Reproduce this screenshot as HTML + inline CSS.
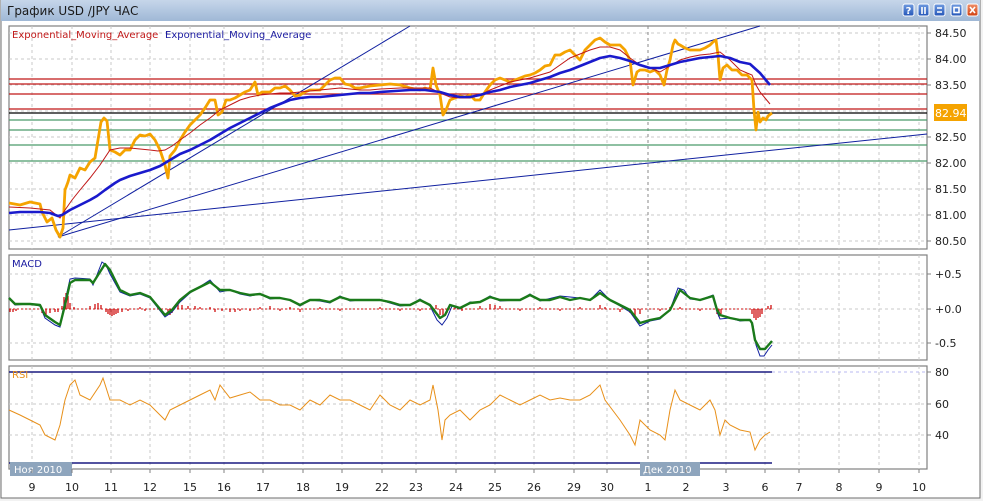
<!DOCTYPE html>
<html><head><meta charset="utf-8"><style>
html,body{margin:0;padding:0;background:#fff;width:983px;height:501px;overflow:hidden}
svg{display:block}
text{font-family:"DejaVu Sans","Liberation Sans",sans-serif}
</style></head><body>
<svg width="983" height="501" viewBox="0 0 983 501">
<rect x="0" y="0" width="983" height="501" fill="#f2f2f2"/>
<rect x="1" y="0" width="979" height="498" fill="#fff" stroke="#6e6e6e" stroke-width="1"/>
<defs><linearGradient id="tb" x1="0" y1="0" x2="0" y2="1"><stop offset="0" stop-color="#c6d6ea"/><stop offset="1" stop-color="#9fb8d6"/></linearGradient>
<linearGradient id="bb" x1="0" y1="0" x2="0" y2="1"><stop offset="0" stop-color="#6f9be0"/><stop offset="1" stop-color="#2456b8"/></linearGradient>
<linearGradient id="br" x1="0" y1="0" x2="0" y2="1"><stop offset="0" stop-color="#f0906a"/><stop offset="1" stop-color="#d04010"/></linearGradient></defs>
<rect x="1" y="0" width="979" height="21" fill="url(#tb)"/>
<text x="7" y="15" font-size="12" fill="#1a1a1a">График USD /JPY  ЧАС</text>
<g stroke="#fff" stroke-width="1">
<rect x="903" y="4" width="11" height="12" rx="2" fill="url(#bb)"/>
<rect x="918" y="4" width="11" height="12" rx="2" fill="url(#bb)"/>
<rect x="934" y="4" width="11" height="12" rx="2" fill="url(#bb)"/>
<rect x="951" y="4" width="11" height="12" rx="2" fill="url(#bb)"/>
<rect x="967" y="4" width="11" height="12" rx="2" fill="url(#br)"/>
</g>
<text x="908.5" y="14" font-size="10" font-weight="bold" fill="#fff" text-anchor="middle">?</text>
<g stroke="#fff" stroke-width="1.6" fill="none">
<path d="M922 7v7M925 7v7M937 8h5M937 12h5"/><rect x="954" y="7.5" width="5" height="5"/><path d="M970 7l5 6M975 7l-5 6"/>
</g>
<g fill="none" stroke="#808080" stroke-width="1.2">
<rect x="9" y="26" width="918" height="223"/>
<rect x="9" y="255" width="918" height="105"/>
<rect x="9" y="366" width="918" height="103"/>
</g>
<g stroke="#c8c8c8" stroke-dasharray="3,3" stroke-width="1">
<path d="M32 26V249M72 26V249M111 26V249M150 26V249M190 26V249M224 26V249M263 26V249M303 26V249M342 26V249M382 26V249M416 26V249M456 26V249M495 26V249M534 26V249M574 26V249M607 26V249M686 26V249M726 26V249M765 26V249M799 26V249M839 26V249M879 26V249M919 26V249"/>
<path d="M32 255V360M72 255V360M111 255V360M150 255V360M190 255V360M224 255V360M263 255V360M303 255V360M342 255V360M382 255V360M416 255V360M456 255V360M495 255V360M534 255V360M574 255V360M607 255V360M686 255V360M726 255V360M765 255V360M799 255V360M839 255V360M879 255V360M919 255V360"/>
<path d="M32 366V469M72 366V469M111 366V469M150 366V469M190 366V469M224 366V469M263 366V469M303 366V469M342 366V469M382 366V469M416 366V469M456 366V469M495 366V469M534 366V469M574 366V469M607 366V469M686 366V469M726 366V469M765 366V469M799 366V469M839 366V469M879 366V469M919 366V469"/>
<path d="M9 33H927M9 59H927M9 85H927M9 111H927M9 137H927M9 163H927M9 189H927M9 215H927M9 241H927"/>
<path d="M9 274H927M9 309H927M9 343H927M9 404H927M9 435H927"/>
</g>
<path d="M648 26V249M648 255V360M648 366V469" stroke="#888" stroke-dasharray="3,3"/>
<g stroke-width="1.2">
<path d="M9 79H927M9 84H927M9 94H927M9 109H927" stroke="#c01818"/>
<path d="M9 113H927" stroke="#000"/>
<path d="M9 120H927M9 130H927M9 145H927M9 161H927" stroke="#4a9a6a"/>
</g>
<g stroke="#1020a0" stroke-width="1" fill="none">
<path d="M58 237L410 26"/><path d="M58 237L760 26"/><path d="M9 230L927 134"/>
</g>
<polyline fill="none" stroke="#f5a300" stroke-width="2.8" stroke-linejoin="round" points="9,203 20,205 30,202 40,204 42,212 47,222 52,218 56,230 60,237 63,228 65,190 68,182 70,175 75,178 80,168 85,170 90,162 95,158 98,140 101,122 104,118 107,121 110,150 115,152 120,155 125,150 130,150 135,140 140,135 145,136 150,134 155,140 160,150 165,165 168,178 170,156 175,150 180,140 185,132 190,125 195,120 200,115 205,108 210,100 215,100 218,115 222,112 226,100 230,100 235,98 240,95 245,92 250,90 255,82 258,95 262,92 270,92 275,88 280,88 285,86 290,90 295,96 300,95 305,92 310,90 320,90 325,85 330,80 335,78 340,78 345,84 350,85 355,88 360,88 370,86 380,85 390,84 400,85 410,88 420,90 425,88 430,90 433,68 436,85 440,95 443,115 446,110 450,100 455,98 460,96 465,97 470,95 475,100 480,100 485,92 490,85 495,80 500,78 505,80 510,82 515,80 520,78 525,76 530,75 535,73 540,70 545,66 550,65 555,55 560,55 565,52 570,50 575,55 580,60 585,50 590,45 595,40 600,38 605,42 610,45 615,45 620,45 625,50 630,60 633,85 637,72 640,70 645,70 650,72 655,70 660,75 664,85 667,70 670,60 673,45 675,40 678,44 680,45 685,48 690,50 695,50 700,50 705,48 710,45 713,42 716,40 718,55 720,80 723,68 727,65 732,70 737,70 742,75 747,75 752,80 754,110 756,130 758,112 760,122 763,118 766,120 768,116 772,113"/>
<polyline fill="none" stroke="#c01818" stroke-width="1" points="9,207 30,208 50,210 60,218 65,210 72,200 80,190 90,178 100,165 110,150 120,148 130,148 140,149 150,150 158,151 165,150 172,146 180,140 190,133 200,125 210,118 220,110 230,105 240,100 250,97 260,95 270,94 280,93 290,93 300,92 310,91 320,90 330,89 340,88 350,89 360,90 370,90 380,89 400,88 420,88 430,88 440,93 450,97 460,98 470,98 480,95 490,90 500,86 510,82 520,80 530,78 540,75 550,72 560,65 570,58 580,54 590,50 600,47 610,47 620,50 630,58 640,65 650,68 660,72 670,66 680,60 690,57 700,55 710,54 720,52 730,60 740,70 747,73 752,75 756,85 760,92 765,98 770,104"/>
<polyline fill="none" stroke="#1a1acc" stroke-width="2.6" stroke-linejoin="round" points="9,213 20,212 40,212 50,213 58,216 62,215 70,210 80,205 90,200 97,196 105,190 115,183 120,180 130,176 140,173 150,170 160,166 170,160 180,154 190,150 200,145 210,140 220,134 230,128 240,123 250,118 260,113 270,108 280,104 290,100 300,98 310,97 320,97 330,96 340,95 350,94 360,93 370,93 380,92 395,91 410,90 425,90 440,92 450,95 460,97 470,97 480,95 490,92 500,90 510,87 520,85 530,83 540,80 550,77 560,73 570,70 580,66 590,62 600,58 610,56 620,58 630,61 640,65 650,68 660,68 670,65 680,62 690,60 700,58 710,57 720,56 730,58 740,62 750,64 760,73 765,79 770,85"/>
<text x="12" y="38" font-size="10" fill="#c01818">Exponential_Moving_Average</text>
<text x="165" y="38" font-size="10" fill="#1a1aa0">Exponential_Moving_Average</text>
<path fill="none" stroke="#d01010" stroke-width="1.3" d="M10 309v3M13 309v3M16 309v2M42 309v4M46 309v6M50 309v4M55 309v3M58 309v3M62 309v-3M64 309v-12M66 309v-16M68 309v-13M70 309v-6M74 309v-2M90 309v-3M95 309v-5M98 309v-6M101 309v-4M106 309v3M108 309v5M110 309v6M112 309v7M114 309v6M116 309v5M118 309v4M122 309v3M128 309v2M140 309v-2M145 309v2M168 309v3M170 309v6M172 309v4M178 309v-5M182 309v-4M188 309v-3M195 309v-3M200 309v-2M210 309v-2M215 309v3M222 309v2M230 309v3M235 309v3M240 309v2M250 309v2M260 309v-2M270 309v-3M280 309v2M290 309v-2M300 309v3M320 309v-2M340 309v2M380 309v-2M400 309v2M420 309v2M436 309v-4M440 309v6M443 309v8M447 309v4M455 309v-2M462 309v2M480 309v-3M490 309v-5M495 309v-4M500 309v-3M520 309v2M540 309v-2M560 309v2M580 309v-2M600 309v-4M605 309v-2M620 309v3M630 309v4M635 309v8M640 309v5M660 309v2M670 309v-2M680 309v-2M700 309v2M717 309v5M719 309v8M721 309v5M752 309v5M754 309v9M756 309v11M758 309v9M760 309v8M762 309v5M768 309v-3M771 309v-4"/>
<path d="M9 309H772" stroke="#d01010" stroke-dasharray="2,2" stroke-width="1"/>
<polyline fill="none" stroke="#1020a0" stroke-width="1" points="9,298 15,305 30,304 40,306 45,318 55,325 60,327 63,310 70,279 75,278 90,279 93,285 102,262 106,265 110,274 120,292 130,296 140,294 150,298 165,317 172,312 180,302 190,293 210,280 220,292 230,290 240,294 250,296 260,294 270,299 280,298 290,300 300,306 310,300 320,301 330,303 340,296 350,301 360,300 380,300 400,306 410,305 420,299 430,306 437,320 442,325 447,318 452,306 460,309 470,302 480,302 490,296 500,301 520,300 530,294 540,301 560,296 580,298 590,300 600,290 610,300 620,306 630,312 640,326 650,321 660,319 670,310 678,288 684,290 690,299 700,300 713,295 717,312 720,319 730,318 740,321 750,320 753,325 756,345 760,356 764,356 768,350 772,345"/>
<polyline fill="none" stroke="#1a7a1a" stroke-width="2.4" stroke-linejoin="round" points="9,298 15,304 30,304 40,305 45,315 55,322 60,325 65,305 70,283 75,280 90,280 93,283 105,264 110,270 120,290 130,295 140,293 150,297 165,315 172,310 180,300 190,292 210,282 220,290 230,290 240,293 250,295 260,294 270,298 280,298 290,300 300,305 310,300 320,300 330,302 340,297 350,300 380,300 390,302 400,305 410,305 420,300 430,305 440,318 445,315 450,305 460,308 470,303 480,302 490,297 500,300 520,300 530,295 540,300 550,300 560,297 570,300 580,298 590,300 600,293 610,300 620,305 630,310 640,323 650,320 660,318 670,310 680,290 690,298 700,300 713,296 717,310 720,315 730,318 740,320 750,320 752,323 755,340 760,349 765,349 772,341"/>
<text x="12" y="267" font-size="10" fill="#1a1aa0">MACD</text>
<path d="M9 372H772" stroke="#1a1a80" stroke-width="1.4"/>
<path d="M772 372H927" stroke="#b8b8f0" stroke-dasharray="3,3"/>
<path d="M9 463H772" stroke="#1a1a80" stroke-width="1.4"/>
<polyline fill="none" stroke="#e8901a" stroke-width="1" points="9,410 20,415 30,420 40,425 45,435 55,440 60,425 65,400 70,385 75,380 80,395 90,400 100,385 103,378 110,400 120,400 130,405 140,400 150,405 160,415 165,420 170,410 180,405 190,400 200,395 210,390 215,400 220,385 230,398 240,395 250,392 260,400 270,400 280,405 290,405 300,410 310,400 320,405 330,395 340,400 350,400 360,405 370,410 380,395 390,405 400,410 410,400 420,405 430,400 433,385 438,410 442,440 445,420 450,415 460,410 470,420 480,410 490,405 500,395 510,400 520,405 530,400 540,395 550,400 560,398 570,400 580,400 590,395 600,385 605,400 620,420 630,435 635,445 640,420 650,430 660,435 665,440 670,410 675,390 680,400 690,405 700,410 710,400 715,410 720,435 725,420 730,425 740,430 750,432 755,450 760,440 765,435 770,432"/>
<text x="12" y="378" font-size="10" fill="#e8901a">RSI</text>
<rect x="10" y="462" width="62" height="14" fill="#8ea5bd"/>
<text x="14" y="473" font-size="10" fill="#fff">Ноя 2010</text>
<rect x="640" y="462" width="60" height="14" fill="#8ea5bd"/>
<text x="643" y="473" font-size="10" fill="#fff">Дек 2010</text>
<g stroke="#808080"><path d="M927 33h4M927 59h4M927 85h4M927 137h4M927 163h4M927 189h4M927 215h4M927 241h4M927 274h4M927 309h4M927 343h4M927 372h4M927 404h4M927 435h4"/></g>
<g font-size="11" fill="#222">
<text x="935" y="37">84.50</text><text x="935" y="63">84.00</text><text x="935" y="89">83.50</text>
<text x="935" y="141">82.50</text><text x="935" y="167">82.00</text><text x="935" y="193">81.50</text>
<text x="935" y="219">81.00</text><text x="935" y="245">80.50</text>
<text x="935" y="278">+0.5</text><text x="935" y="313">+0.0</text><text x="935" y="347">-0.5</text>
<text x="935" y="376">80</text><text x="935" y="408">60</text><text x="935" y="439">40</text>
</g>
<rect x="934" y="104" width="33" height="17" fill="#f5a300"/>
<text x="935" y="117" font-size="11" fill="#fff">82.94</text>
<g stroke="#808080"><path d="M32 469v4M72 469v4M111 469v4M150 469v4M190 469v4M224 469v4M263 469v4M303 469v4M342 469v4M382 469v4M416 469v4M456 469v4M495 469v4M534 469v4M574 469v4M607 469v4M648 469v4M686 469v4M726 469v4M765 469v4M799 469v4M839 469v4M879 469v4M919 469v4"/></g>
<g font-size="11" fill="#222" text-anchor="middle">
<text x="32" y="491">9</text><text x="72" y="491">10</text><text x="111" y="491">11</text><text x="150" y="491">12</text><text x="190" y="491">15</text><text x="224" y="491">16</text><text x="263" y="491">17</text><text x="303" y="491">18</text><text x="342" y="491">19</text><text x="382" y="491">22</text><text x="416" y="491">23</text><text x="456" y="491">24</text><text x="495" y="491">25</text><text x="534" y="491">26</text><text x="574" y="491">29</text><text x="607" y="491">30</text><text x="648" y="491">1</text><text x="686" y="491">2</text><text x="726" y="491">3</text><text x="765" y="491">6</text><text x="799" y="491">7</text><text x="839" y="491">8</text><text x="879" y="491">9</text><text x="919" y="491">10</text>
</g>
</svg>
</body></html>
